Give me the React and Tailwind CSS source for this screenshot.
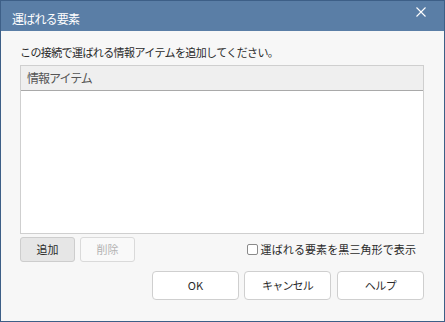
import React from "react";

const font = { fontFamily: '"Noto Sans CJK JP", "Noto Sans", sans-serif' };

export default function App() {
  return (
    <div
      className="w-[445px] h-[322px] border border-[#3d5f87] bg-[#f7f7f7] flex flex-col text-[#333] overflow-hidden"
      style={font}
    >
      <div className="h-[30px] shrink-0 bg-[#5a7ea6] flex items-start justify-between pl-[11px] pr-[18px]">
        <span className="text-white text-[12px] leading-[14px] pt-[11px] tracking-[-0.8px]">運ばれる要素</span>
        <svg width="10" height="10" viewBox="0 0 10 10" className="mt-[6px]">
          <path d="M0.5 0.5 L9.5 9.5 M9.5 0.5 L0.5 9.5" stroke="#fff" strokeWidth="1.1" fill="none" />
        </svg>
      </div>
      <div className="flex flex-col pl-[19px] pr-[20px]">
        <div className="mt-[12px] h-[18px] text-[11px] leading-[18px] tracking-[-0.6px] text-[#2b2b2b]">
          この接続で運ばれる情報アイテムを追加してください。
        </div>
        <div className="mt-[4px] h-[169px] border border-[#cfcfcf] bg-white flex flex-col">
          <div className="h-[25px] bg-[#efefef] border-b border-[#a9a9a9] flex items-center pl-[6px] text-[12px] text-[#555] tracking-[-1px]">
            情報アイテム
          </div>
        </div>
        <div className="mt-[3px] h-[25px] flex items-center">
          <button className="w-[55px] h-[25px] rounded-[3px] border border-[#cdcdcd] bg-[#e6e6e6] text-[11px] text-[#2b2b2b]">
            追加
          </button>
          <button className="ml-[5px] w-[55px] h-[25px] rounded-[3px] border border-[#dadada] bg-[#f9f9f9] text-[11px] text-[#b3b3b3]">
            削除
          </button>
          <div className="ml-auto flex items-center mr-[8px]">
            <span className="w-[11px] h-[11px] border border-[#8a8a8a] rounded-[2px] bg-white" />
            <span className="ml-[3px] text-[11px] tracking-[0.1px] text-[#2b2b2b]">運ばれる要素を黒三角形で表示</span>
          </div>
        </div>
        <div className="mt-[9px] h-[29px] flex justify-end gap-[5px]">
          <button className="w-[87px] h-[29px] rounded-[4px] border border-[#cfcfcf] bg-white text-[11px] text-[#2b2b2b]">
            OK
          </button>
          <button className="w-[87px] h-[29px] rounded-[4px] border border-[#cfcfcf] bg-white text-[11px] text-[#2b2b2b] tracking-[-0.8px]">
            キャンセル
          </button>
          <button className="ml-[1px] w-[87px] h-[29px] rounded-[4px] border border-[#cfcfcf] bg-white text-[11px] text-[#2b2b2b] tracking-[-0.5px]">
            ヘルプ
          </button>
        </div>
      </div>
    </div>
  );
}
